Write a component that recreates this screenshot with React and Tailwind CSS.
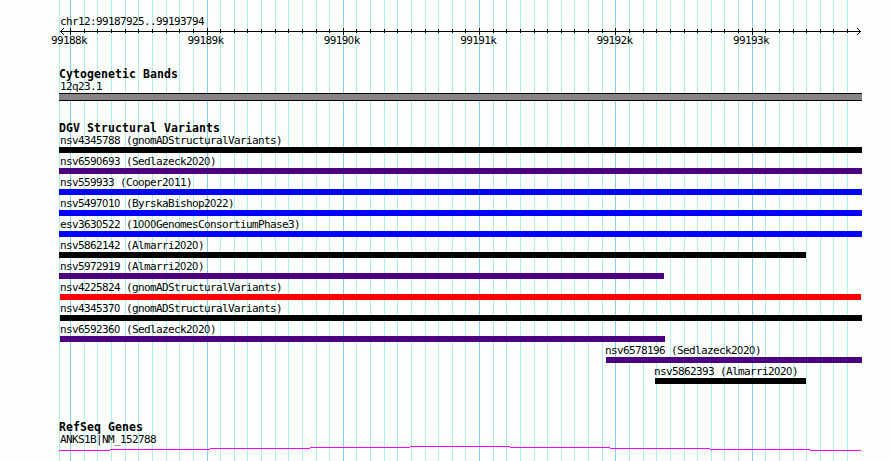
import React from 'react';

const MINOR = [
  59, 84, 97, 111, 125, 138, 152, 166, 179, 193, 220, 234, 247, 261, 275, 288, 302, 316, 329,
  356, 370, 384, 397, 411, 425, 438, 452, 465, 493, 506, 520, 534, 547, 561, 574, 588, 602,
  629, 643, 656, 670, 684, 697, 711, 724, 738, 765, 779, 793, 806, 820, 833, 847,
];
const MAJOR = [70, 207, 343, 479, 615, 752];
const AXIS_LABELS = ['99188k', '99189k', '99190k', '99191k', '99192k', '99193k'];

const VARIANTS = [
  { name: 'nsv4345788 (gnomADStructuralVariants)', start: 59, end: 862, color: 'bg-black' },
  { name: 'nsv6590693 (Sedlazeck2020)', start: 59, end: 862, color: 'bg-[#4b0082]' },
  { name: 'nsv559933 (Cooper2011)', start: 59, end: 862, color: 'bg-[#0000ff]' },
  { name: 'nsv5497010 (ByrskaBishop2022)', start: 59, end: 862, color: 'bg-[#0000ff]' },
  { name: 'esv3630522 (1000GenomesConsortiumPhase3)', start: 59, end: 862, color: 'bg-[#0000ff]' },
  { name: 'nsv5862142 (Almarri2020)', start: 59, end: 806, color: 'bg-black' },
  { name: 'nsv5972919 (Almarri2020)', start: 59, end: 664, color: 'bg-[#4b0082]' },
  { name: 'nsv4225824 (gnomADStructuralVariants)', start: 60, end: 861, color: 'bg-[#ff0000]' },
  { name: 'nsv4345370 (gnomADStructuralVariants)', start: 60, end: 862, color: 'bg-black' },
  { name: 'nsv6592360 (Sedlazeck2020)', start: 60, end: 665, color: 'bg-[#4b0082]' },
  { name: 'nsv6578196 (Sedlazeck2020)', start: 606, end: 862, color: 'bg-[#4b0082]' },
  { name: 'nsv5862393 (Almarri2020)', start: 655, end: 806, color: 'bg-black' },
];

// Vertical guide lines behind every track
function Grid() {
  return (
    <svg className="absolute inset-0 -z-10" width="890" height="461" shapeRendering="crispEdges">
      {MINOR.map((x) => (
        <rect key={x} x={x} y="0" width="1" height="461" fill="#afeeee" />
      ))}
      {MAJOR.map((x) => (
        <rect key={x} x={x} y="0" width="1" height="461" fill="#87ceeb" />
      ))}
    </svg>
  );
}

function Axis() {
  return (
    <svg className="block" width="890" height="7" shapeRendering="crispEdges">
      <rect x="60" y="3" width="801" height="1" />
      {MINOR.slice(1).map((x) => (
        <rect key={x} x={x} y="1" width="1" height="4" />
      ))}
      {MAJOR.map((x) => (
        <rect key={x} x={x} y="0" width="1" height="7" />
      ))}
      {[1, 2, 3].map((d) => (
        <g key={d}>
          <rect x={60 + d} y={3 - d} width="1" height="1" />
          <rect x={60 + d} y={3 + d} width="1" height="1" />
          <rect x={860 - d} y={3 - d} width="1" height="1" />
          <rect x={860 - d} y={3 + d} width="1" height="1" />
        </g>
      ))}
    </svg>
  );
}

// Zeros are set in a face whose zero has no inner mark
function Label({ children }) {
  return (
    <div className="h-[12px] whitespace-pre text-[11px] leading-[14px] tracking-[-0.622px]">
      {children.split(/(0)/).map((part, i) =>
        part === '0' ? (
          <span key={i} className="font-['DejaVu_Sans_Condensed','DejaVu_Sans',sans-serif] tracking-[-0.3px] [font-stretch:condensed]">0</span>
        ) : (
          part
        ),
      )}
    </div>
  );
}

function Title({ children }) {
  return (
    <h2 className="h-[12px] pl-[59px] text-[11.5px] font-bold leading-[12px] tracking-[0.077px] whitespace-pre">
      {children}
    </h2>
  );
}

function Variant({ name, start, end, color }) {
  const labelX = start < 100 ? 60 : start - 1;
  return (
    <div className="flex h-[21px] flex-col">
      <div className="h-[15px] pt-[2px]" style={{ paddingLeft: labelX }}>
        <Label>{name}</Label>
      </div>
      <div className={'h-[6px] ' + color} style={{ marginLeft: start, width: end - start }} />
    </div>
  );
}

const GENE = [
  [59, 110, 4], [110, 210, 3], [210, 310, 2], [310, 410, 1], [410, 510, 0],
  [510, 610, 1], [610, 710, 2], [710, 810, 3], [810, 861, 4],
];

export default function App() {
  return (
    <main className="relative isolate h-[461px] w-[890px] overflow-hidden bg-[#fdfffc] font-['DejaVu_Sans_Mono',monospace] text-black">
      <Grid />
      <header className="h-[68px] pt-[15px]">
        <div className="h-[13px] pl-[60px]">
          <Label>chr12:99187925..99193794</Label>
        </div>
        <Axis />
        <div className="flex gap-[100.4px] pl-[51px]">
          {AXIS_LABELS.map((t) => (
            <div key={t} className="-mt-px w-[36px]">
              <Label>{t}</Label>
            </div>
          ))}
        </div>
      </header>
      <section className="h-[54px]">
        <Title>Cytogenetic Bands</Title>
        <div className="h-[13px] pl-[60px]">
          <Label>12q23.1</Label>
        </div>
        <div className="ml-[59px] h-[8px] w-[803px] border-y border-black bg-[#878387]" />
      </section>
      <section className="h-[299px]">
        <Title>DGV Structural Variants</Title>
        <div className="-mt-[2px]">
          {VARIANTS.map((v) => (
            <Variant key={v.name} {...v} />
          ))}
        </div>
      </section>
      <section>
        <Title>RefSeq Genes</Title>
        <div className="h-[13px] pl-[60px]">
          <Label>ANKS1B|NM_152788</Label>
        </div>
        <svg className="block" width="890" height="6" shapeRendering="crispEdges">
          {GENE.map(([a, b, y]) => (
            <rect key={a} x={a} y={y} width={b - a} height="1" fill="#ff00ff" />
          ))}
        </svg>
      </section>
    </main>
  );
}
